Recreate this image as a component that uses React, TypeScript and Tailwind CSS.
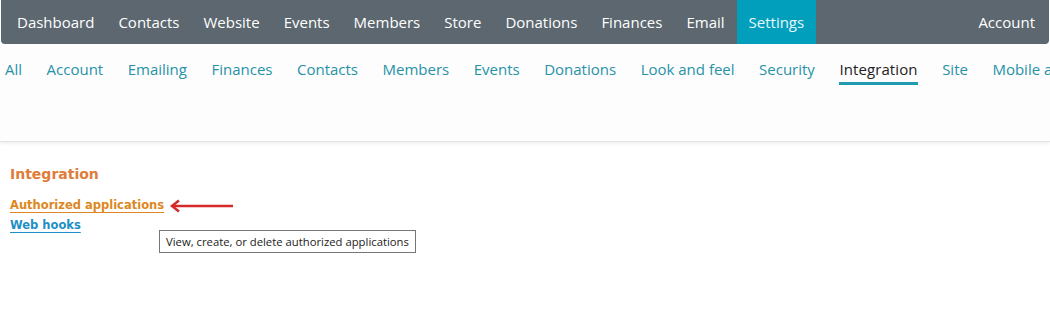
import { useState } from "react";

const topItems = [
  "Dashboard",
  "Contacts",
  "Website",
  "Events",
  "Members",
  "Store",
  "Donations",
  "Finances",
  "Email",
  "Settings",
];

const subItems = [
  "All",
  "Account",
  "Emailing",
  "Finances",
  "Contacts",
  "Members",
  "Events",
  "Donations",
  "Look and feel",
  "Security",
  "Integration",
  "Site",
  "Mobile app",
];

function App() {
  const [active] = useState("Settings");
  const [sub] = useState("Integration");

  return (
    <div className="w-[1050px] h-[324px] overflow-hidden bg-white font-['Open_Sans',sans-serif]">
      {/* top menu */}
      <div className="mx-px h-[44px] bg-[#5c676f] rounded-b-[4px] flex items-stretch text-white text-[15px]">
        <div className="flex pl-[4px]">
          {topItems.map((item) => (
            <div
              key={item}
              className={
                "flex items-center px-3 pt-px " +
                (item === active ? "bg-[#029fbd] text-[#e6f7fa]" : "")
              }
            >
              {item}
            </div>
          ))}
        </div>
        <div className="ml-auto flex items-center pt-px pr-[14px]">Account</div>
      </div>

      {/* sub menu */}
      <div className="h-[98px] bg-[#fdfdfd] border-b border-[#e2e2e4] shadow-[0_2px_3px_rgba(0,0,0,0.06)] overflow-hidden">
        <div className="flex whitespace-nowrap pl-[5px] pt-[14px] text-[15px] gap-[24.5px]">
          {subItems.map((item) => (
            <div
              key={item}
              className={
                item === sub
                  ? "text-[#222] border-b-[3px] border-[#1f9cb0] pb-[1px] tracking-[0.1px]"
                  : "text-[#2792a7] pb-[4px]"
              }
            >
              {item}
            </div>
          ))}
        </div>
      </div>

      {/* content */}
      <div className="px-[10px] pt-[22px] font-['DejaVu_Sans',sans-serif]">
        <h2 className="text-[#e07c3a] font-bold text-[14px] leading-[20px]">Integration</h2>
        <div className="mt-[12px] flex flex-col gap-[1px] text-[11.5px] font-bold leading-[19px]">
          <div className="flex items-center">
            <a className="text-[#dd8722] underline underline-offset-[3px]">Authorized applications</a>
            <svg width="66" height="14" viewBox="0 0 66 14" className="ml-[5px]">
              <path d="M64 7H4" stroke="#d62a2a" strokeWidth="2.5" />
              <path d="M10 1.5L3 7l7 5.5" fill="none" stroke="#d62a2a" strokeWidth="2.5" />
            </svg>
          </div>
          <div className="relative">
            <a className="text-[#1e8fc6] underline underline-offset-[3px]">Web hooks</a>
            <div className="absolute left-[149px] top-[14px] border border-[#767676] bg-white px-[6px] py-[1px] text-[11.3px] font-normal text-[#222] font-['Open_Sans',sans-serif] whitespace-nowrap leading-[19px]">
              View, create, or delete authorized applications
            </div>
          </div>
        </div>
      </div>
    </div>
  );
}

export default App;
